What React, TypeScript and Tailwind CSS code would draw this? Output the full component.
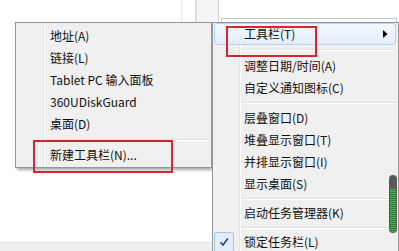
import React from "react";

function Sep({ ml, h, mr = "mr-[2px]" }: { ml: string; h: string; mr?: string }) {
  return (
    <div className={`flex flex-col justify-center ${h}`}>
      <div className={`${ml} ${mr} border-t border-b border-t-[#e0e0e0] border-b-white`} />
    </div>
  );
}

function LeftItem({ label }: { label: string }) {
  return <div className="h-[22px] flex items-center pl-[34px] whitespace-nowrap">{label}</div>;
}

function RightItem({ label }: { label: string }) {
  return <div className="h-[22px] flex items-center pl-[31px] whitespace-nowrap">{label}</div>;
}

export default function App() {
  return (
    <div className="relative w-[399px] h-[251px] overflow-hidden bg-white font-['Noto_Sans_CJK_SC','Microsoft_YaHei',sans-serif] text-[12px] text-[#111]">
      {/* background window */}
      <div className="flex flex-col h-full">
        <div className="flex h-[22px]">
          <div className="flex-1" />
          <div className="w-[14px] border-l border-[#e8e8e8]" />
          <div className="w-[23px] border-l-2 border-[#dcdcdc] bg-[#f5f5f5]" />
          <div className="flex-1 border-l border-[#cfcfcf] flex flex-col justify-end">
            <div className="h-[4px] mx-[2px] border border-b-0 border-[#c8c8c8] bg-white" />
          </div>
        </div>
        <div className="flex-1" />
        <div className="h-[9px] bg-[#eef0ee] border-t border-[#e2e4e2]" />
      </div>

      {/* left submenu */}
      <div className="absolute left-[15px] top-[22px] w-[197px] h-[146px] border border-[#979797] bg-[#f0f0f0] shadow-[2px_2px_3px_rgba(0,0,0,0.35)] pt-[2px]">
        <div className="absolute left-[27px] top-0 bottom-0 w-[2px] border-l border-l-[#e2e3e3] border-r border-r-white" />
        <div className="relative flex flex-col">
          <LeftItem label="地址(A)" />
          <LeftItem label="链接(L)" />
          <LeftItem label="Tablet PC 输入面板" />
          <LeftItem label="360UDiskGuard" />
          <LeftItem label="桌面(D)" />
          <Sep ml="ml-[29px]" h="h-[9px]" />
          <LeftItem label="新建工具栏(N)..." />
        </div>
      </div>

      {/* right main menu */}
      <div className="absolute left-[212px] top-[22px] w-[187px] h-[240px] border border-[#979797] bg-[#f0f0f0]">
        <div className="absolute left-[26px] top-0 bottom-0 w-[2px] border-l border-l-[#e2e3e3] border-r border-r-white" />
        <div className="relative flex flex-col">
          <div className="h-[22px] ml-[1px] mr-[2px] rounded-[3px] border border-[#b4d2f3] bg-[linear-gradient(to_bottom,#f5f9fe,#e1edfa)] flex items-center justify-between pl-[29px] pr-[7px]">
            <span className="whitespace-nowrap">工具栏(T)</span>
            <svg width="5" height="8" viewBox="0 0 5 8">
              <path d="M0 0 L4.5 4 L0 8 Z" fill="#000" />
            </svg>
          </div>
          <Sep ml="ml-[28px]" h="h-[10px]" />
          <RightItem label="调整日期/时间(A)" />
          <RightItem label="自定义通知图标(C)" />
          <Sep ml="ml-[28px]" h="h-[8px]" />
          <RightItem label="层叠窗口(D)" />
          <RightItem label="堆叠显示窗口(T)" />
          <RightItem label="并排显示窗口(I)" />
          <RightItem label="显示桌面(S)" />
          <Sep ml="ml-[28px]" h="h-[7px]" />
          <RightItem label="启动任务管理器(K)" />
          <Sep ml="ml-[28px]" h="h-[7px]" />
          <div className="h-[22px] flex items-center pl-[1px]">
            <div className="w-[20px] h-[20px] rounded-[2px] border border-[#a7c5ea] bg-[#e4eefb] flex items-center justify-center">
              <svg width="10" height="10" viewBox="0 0 10 10">
                <path d="M1.5 5.2 L4 8 L8.8 1.5" fill="none" stroke="#1d3f9a" strokeWidth="1.6" />
              </svg>
            </div>
            <span className="ml-[10px] whitespace-nowrap">锁定任务栏(L)</span>
          </div>
        </div>
      </div>

      {/* red annotation boxes */}
      <div className="absolute left-[226px] top-[26px] w-[91px] h-[31px] border-2 border-[#d6262f]" />
      <div className="absolute left-[33px] top-[140px] w-[140px] h-[33px] border-2 border-[#d6262f]" />

      {/* floating vertical indicator */}
      <div className="absolute left-[389px] top-[175px] w-[8px] h-[58px] rounded-full bg-[#5a5a5a] flex flex-col p-[1px]">
        <div className="h-[13px]" />
        <div className="flex-1 rounded-b-full bg-[image:repeating-linear-gradient(to_bottom,#4cb35a_0px,#4cb35a_1px,#2f7a3a_1px,#2f7a3a_2px)]" />
      </div>
    </div>
  );
}
